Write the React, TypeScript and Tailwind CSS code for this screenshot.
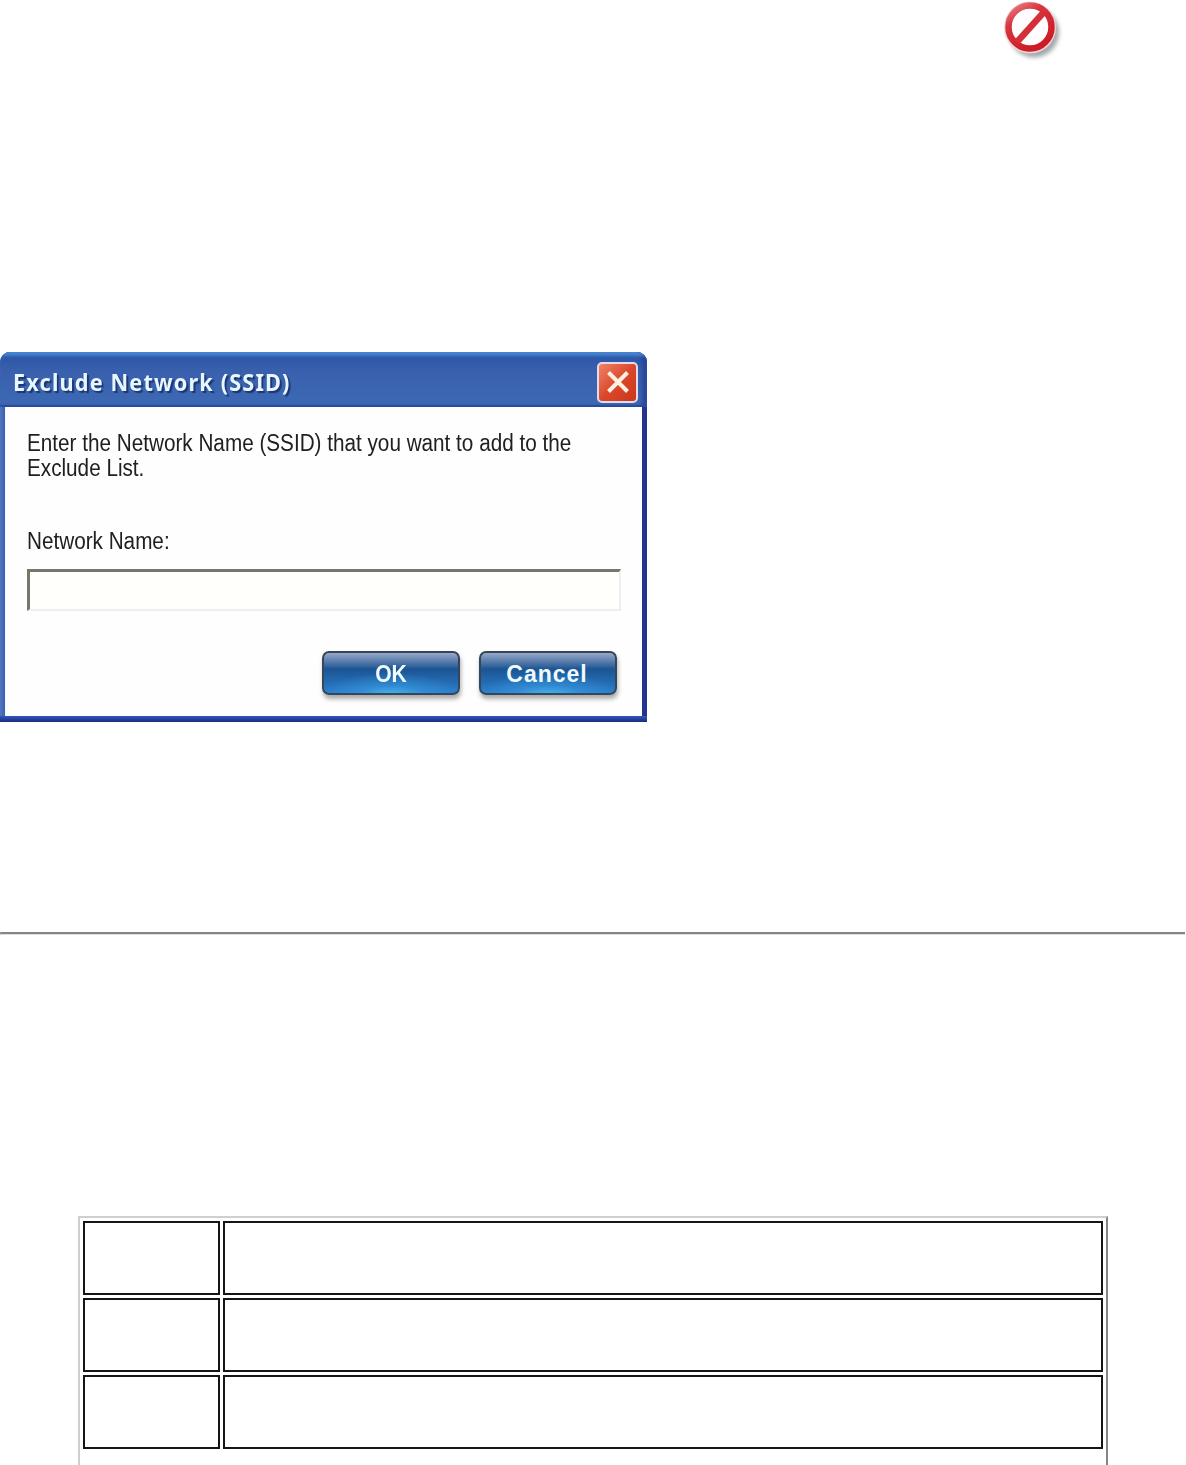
function ProhibitedIcon() {
  return (
    <svg className="block" width="66" height="62" viewBox="0 0 66 62">
      <defs>
        <linearGradient id="ring" x1="0" y1="0" x2="0.6" y2="1">
          <stop offset="0" stopColor="#e8838a" />
          <stop offset="0.35" stopColor="#d9343d" />
          <stop offset="1" stopColor="#cc1c25" />
        </linearGradient>
        <filter id="shadow" x="-30%" y="-30%" width="160%" height="160%">
          <feGaussianBlur stdDeviation="2.2" />
        </filter>
      </defs>
      <circle cx="32" cy="32.5" r="25" fill="#8a9298" opacity="0.8" filter="url(#shadow)" />
      <circle cx="28" cy="27.5" r="26" fill="#f0d5d6" />
      <circle cx="28" cy="27" r="21.5" fill="#fffdfd" stroke="url(#ring)" strokeWidth="6.5" />
      <path d="M14.5 42.5 42 12" stroke="#d3303a" strokeWidth="6.5" />
    </svg>
  );
}

function DialogButton({ label, textClass }: { label: string; textClass: string }) {
  return (
    <button className="relative w-[138px] h-[44px] rounded-[7px] border-2 border-[#36465a] bg-linear-to-b from-[#98a9c7] from-0% via-[#1b5593] via-40% to-[#2b7dcb] to-100% shadow-[1px_4px_4px_rgba(70,70,70,0.45)]">
      <span className="absolute inset-0 rounded-[5px] bg-[radial-gradient(ellipse_55%_55%_at_50%_105%,#46b4ed_0%,rgba(55,155,225,0.55)_45%,transparent_100%)]" />
      <span className={textClass}>{label}</span>
    </button>
  );
}

function ExcludeDialog() {
  return (
    <div className="w-[647px] h-[370px] shrink-0 rounded-t-[10px] bg-[#2a4fae] bg-linear-to-r from-[#5277bb] from-0% via-[#3158b1] via-1% to-[#22348f] flex flex-col overflow-hidden">
      <div className="h-[55px] shrink-0 flex items-center justify-between pl-[13px] pr-[9px] pt-[5px] bg-linear-to-b from-[#2853a5] from-0% via-[#3a60ad] via-35% to-[#3c68b3] to-90% shadow-[inset_0_5px_3px_-1px_#4784cf,inset_0_-2px_1px_#294a9f,inset_-5px_0_4px_#294496]">
        <h1 className="whitespace-nowrap font-['Noto_Sans'] text-[23px] font-bold leading-[30px] tracking-[1.2px] text-[#e7f6ff] origin-left scale-x-[0.945] [text-shadow:2px_2px_1px_#1c3673]">
          Exclude Network (SSID)
        </h1>
        <button className="size-[41px] shrink-0 rounded-[5px] border-2 border-[#e1dce8] bg-linear-to-br from-[#ef8266] via-[#db472b] to-[#c93719] flex items-center justify-center">
          <svg width="24" height="24" viewBox="0 0 24 24" fill="none" stroke="#fff0df" strokeWidth="4">
            <path d="M2.5 2.5 21.5 21.5M21.5 2.5 2.5 21.5" />
          </svg>
        </button>
      </div>
      <div className="ml-[5px] mr-[5px] h-[309px] shrink-0 bg-[#fefefe] pl-[21px] pr-[21px] pt-[24px] border-l border-[#eefaff] font-['Liberation_Sans'] text-[#202020]">
        <p className="w-max whitespace-nowrap text-[23px] leading-[25px] origin-left scale-x-[0.9]">
          Enter the Network Name (SSID) that you want to add to the
          <br />
          Exclude List.
        </p>
        <p className="mt-[48px] w-max text-[23px] leading-[25px] origin-left scale-x-[0.9]">Network Name:</p>
        <input className="mt-[15px] block w-[594px] h-[42px] bg-[#fffffc] border-t-[3px] border-l-[3px] border-r-2 border-b-2 border-t-[#77766b] border-l-[#77766b] border-r-[#efefed] border-b-[#efefed] outline-none" />
        <div className="mt-[40px] pr-[4px] flex justify-end gap-[19px]">
          <DialogButton
            label="OK"
            textClass="relative block font-['Liberation_Sans'] text-[23px] font-bold leading-[42px] text-[#eefaff] scale-x-[0.92]"
          />
          <DialogButton
            label="Cancel"
            textClass="relative block right-[1px] font-['Liberation_Sans'] text-[23px] font-bold leading-[42px] tracking-[1px] text-[#eefaff]"
          />
        </div>
      </div>
      <div className="grow bg-linear-to-b from-[#2f59b8] to-[#1d2982]" />
    </div>
  );
}

const ROWS = [0, 1, 2];

export default function App() {
  return (
    <main className="w-[1186px] h-[1465px] bg-white overflow-hidden flex flex-col">
      <div className="h-[352px] shrink-0 pl-[1002px]">
        <ProhibitedIcon />
      </div>
      <ExcludeDialog />
      <hr className="mt-[210px] h-[3px] w-[1185px] shrink-0 border-t-2 border-b border-l border-t-[#858585] border-b-[#dedede] border-l-[#aaaaaa]" />
      <div className="mt-[281px] ml-[78px] w-[1030px] h-[300px] shrink-0 border-2 border-t-[#cfcfcf] border-l-[#cfcfcf] border-r-[#858585] border-b-[#858585] p-[3px] flex flex-col gap-[3px]">
        {ROWS.map((row) => (
          <div key={row} className="flex gap-[3px] h-[74px] shrink-0">
            <div className="w-[137px] border-2 border-[#151515]" />
            <div className="flex-1 border-2 border-[#151515]" />
          </div>
        ))}
      </div>
    </main>
  );
}
